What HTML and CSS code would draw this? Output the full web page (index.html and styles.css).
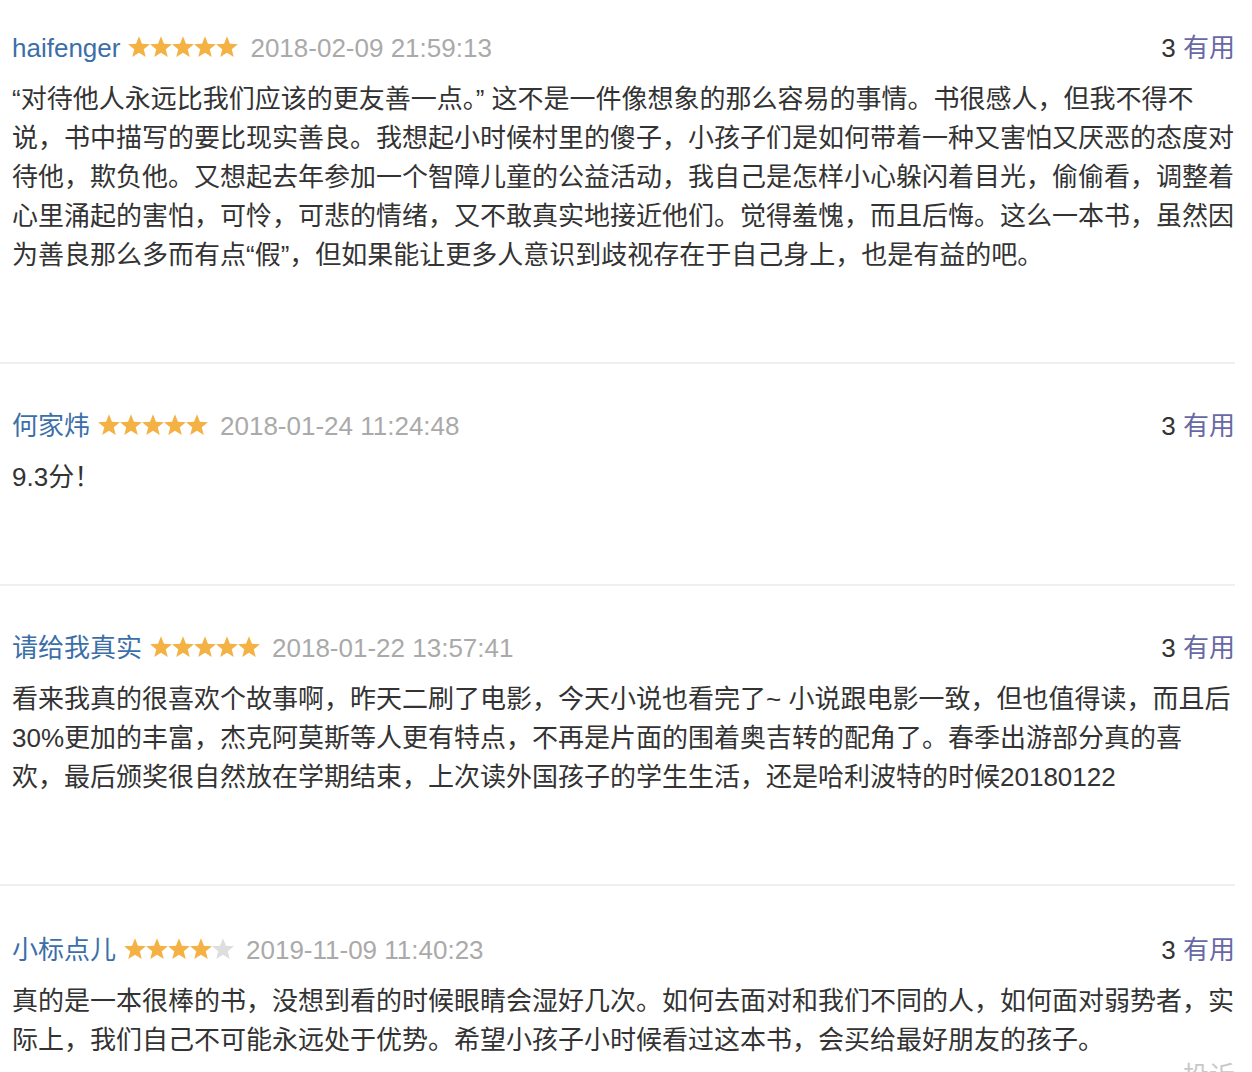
FILE: index.html
```html
<!DOCTYPE html>
<html lang="zh-CN">
<head>
<meta charset="utf-8">
<title>短评</title>
<link rel="stylesheet" href="styles.css">
</head>
<body>
<svg class="defs" width="0" height="0" aria-hidden="true">
  <defs>
    <path id="star" d="M11 0.3 L13.94 7.75 L21.94 8.25 L15.76 13.35 L17.76 21.1 L11 16.8 L4.24 21.1 L6.24 13.35 L0.06 8.25 L8.06 7.75 Z"/>
  </defs>
</svg>
<div class="comments">
  <div class="review">
    <div class="review-head">
      <div class="meta">
        <a class="author" href="#">haifenger</a>
        <svg class="stars" width="110" height="22" viewBox="0 0 110 22"><use href="#star" class="on"/><use href="#star" x="22" class="on"/><use href="#star" x="44" class="on"/><use href="#star" x="66" class="on"/><use href="#star" x="88" class="on"/></svg>
        <span class="date">2018-02-09 21:59:13</span>
      </div>
      <div class="votes"><span class="count">3</span> <a class="useful" href="#">有用</a></div>
    </div>
    <p class="content">“对待他人永远比我们应该的更友善一点。” 这不是一件像想象的那么容易的事情。书很感人，但我不得不说，书中描写的要比现实善良。我想起小时候村里的傻子，小孩子们是如何带着一种又害怕又厌恶的态度对待他，欺负他。又想起去年参加一个智障儿童的公益活动，我自己是怎样小心躲闪着目光，偷偷看，调整着心里涌起的害怕，可怜，可悲的情绪，又不敢真实地接近他们。觉得羞愧，而且后悔。这么一本书，虽然因为善良那么多而有点“假”，但如果能让更多人意识到歧视存在于自己身上，也是有益的吧。</p>
  </div>
  <div class="review">
    <div class="review-head">
      <div class="meta">
        <a class="author" href="#">何家炜</a>
        <svg class="stars" width="110" height="22" viewBox="0 0 110 22"><use href="#star" class="on"/><use href="#star" x="22" class="on"/><use href="#star" x="44" class="on"/><use href="#star" x="66" class="on"/><use href="#star" x="88" class="on"/></svg>
        <span class="date">2018-01-24 11:24:48</span>
      </div>
      <div class="votes"><span class="count">3</span> <a class="useful" href="#">有用</a></div>
    </div>
    <p class="content">9.3分！</p>
  </div>
  <div class="review">
    <div class="review-head">
      <div class="meta">
        <a class="author" href="#">请给我真实</a>
        <svg class="stars" width="110" height="22" viewBox="0 0 110 22"><use href="#star" class="on"/><use href="#star" x="22" class="on"/><use href="#star" x="44" class="on"/><use href="#star" x="66" class="on"/><use href="#star" x="88" class="on"/></svg>
        <span class="date">2018-01-22 13:57:41</span>
      </div>
      <div class="votes"><span class="count">3</span> <a class="useful" href="#">有用</a></div>
    </div>
    <p class="content">看来我真的很喜欢个故事啊，昨天二刷了电影，今天小说也看完了~ 小说跟电影一致，但也值得读，而且后30%更加的丰富，杰克阿莫斯等人更有特点，不再是片面的围着奥吉转的配角了。春季出游部分真的喜<br>欢，最后颁奖很自然放在学期结束，上次读外国孩子的学生生活，还是哈利波特的时候20180122</p>
  </div>
  <div class="review last">
    <div class="review-head">
      <div class="meta">
        <a class="author" href="#">小标点儿</a>
        <svg class="stars" width="110" height="22" viewBox="0 0 110 22"><use href="#star" class="on"/><use href="#star" x="22" class="on"/><use href="#star" x="44" class="on"/><use href="#star" x="66" class="on"/><use href="#star" x="88" class="off"/></svg>
        <span class="date">2019-11-09 11:40:23</span>
      </div>
      <div class="votes"><span class="count">3</span> <a class="useful" href="#">有用</a></div>
    </div>
    <p class="content">真的是一本很棒的书，没想到看的时候眼睛会湿好几次。如何去面对和我们不同的人，如何面对弱势者，实际上，我们自己不可能永远处于优势。希望小孩子小时候看过这本书，会买给最好朋友的孩子。</p>
    <div class="report"><a href="#">投诉</a></div>
  </div>
</div>
</body>
</html>
```

FILE: styles.css
```css
html, body {
  margin: 0;
  padding: 0;
  background: #fff;
}

body {
  font-family: "Liberation Sans", "Noto Sans CJK SC", sans-serif;
  font-size: 26px;
  color: #333;
  overflow: hidden;
}

.defs {
  position: absolute;
  width: 0;
  height: 0;
}

.comments {
  width: 1235px;
}

.review {
  padding: 43px 0 87px 12px;
  border-bottom: 2px solid #efefef;
}

.review:first-child {
  padding-top: 29px;
}

.review.last {
  border-bottom: none;
  padding-top: 45px;
  padding-bottom: 0;
}

.review-head {
  display: flex;
  justify-content: space-between;
  align-items: center;
  height: 39px;
  line-height: 39px;
}

.meta {
  display: flex;
  align-items: center;
}

.author {
  color: #3b6fa8;
  text-decoration: none;
}

.stars {
  display: block;
  margin: 0 12px 0 8px;
  position: relative;
  top: -2px;
}

.stars .on {
  fill: #f4b144;
}

.stars .off {
  fill: #dedede;
}

.date {
  color: #aaa;
}

.votes {
  white-space: nowrap;
}

.count {
  color: #333;
}

.useful {
  color: #6868a4;
  text-decoration: none;
}

.content {
  margin: 12px 0 0 0;
  line-height: 39px;
  color: #333;
}

.report {
  text-align: right;
  line-height: 26px;
  margin-top: 3px;
}

.report a {
  color: #c8c8c8;
  text-decoration: none;
}
```
